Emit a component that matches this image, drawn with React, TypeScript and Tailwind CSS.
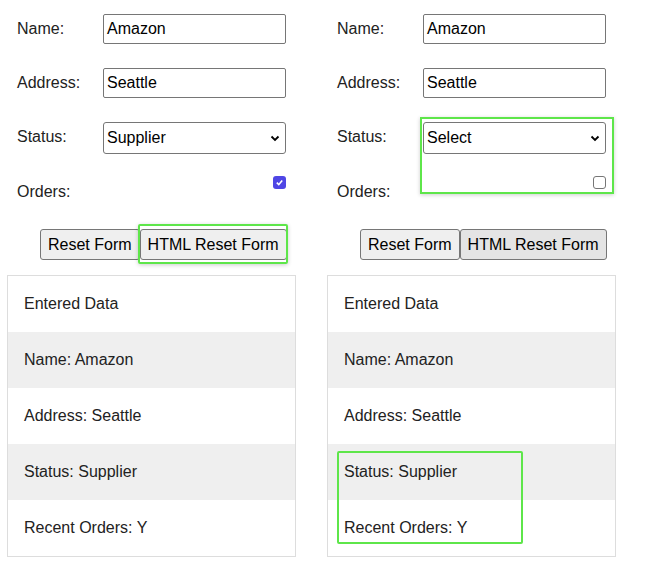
const font = { fontFamily: '"Liberation Sans", Arial, sans-serif' };

function Panel({ status, checked, hlButton, hlStatus, hlTable }: { status: string; checked: boolean; hlButton?: boolean; hlStatus?: boolean; hlTable?: boolean }) {
  const rows = ['Entered Data', 'Name: Amazon', 'Address: Seattle', 'Status: Supplier', 'Recent Orders: Y'];
  return (
    <div className="relative w-[310px] shrink-0 text-[16px] text-[#222]">
      <div className="flex flex-col pl-[10px]">
        <div className="flex h-[54px] pt-[14px]">
          <span className="w-[93px] pl-[7px] pt-[3px]">Name:</span>
          <div className="w-[183px] h-[30px] border border-[#767676] rounded-[2px] px-[3px] flex items-center text-black">Amazon</div>
        </div>
        <div className="flex h-[54px] pt-[14px]">
          <span className="w-[93px] pl-[7px] pt-[3px]">Address:</span>
          <div className="w-[183px] h-[30px] border border-[#767676] rounded-[2px] px-[3px] flex items-center text-black">Seattle</div>
        </div>
        <div className="flex h-[54px] pt-[14px]">
          <span className="w-[93px] pl-[7px] pt-[3px]">Status:</span>
          <div className="w-[183px] h-[32px] border border-[#767676] rounded-[3px] px-[3px] flex items-center justify-between text-black">
            <span>{status}</span>
            <svg width="12" height="12" viewBox="0 0 12 12" className="mr-[1px]"><path d="M2.5 4.5 6 8l3.5-3.5" stroke="#000" strokeWidth="1.8" fill="none" /></svg>
          </div>
        </div>
        <div className="flex h-[46px] pt-[14px]">
          <span className="w-[93px] pl-[7px] pt-[4px]">Orders:</span>
          <div className="w-[183px] flex justify-end">
            {checked ? (
              <div className="w-[13px] h-[13px] rounded-[3px] bg-[#4f46e5] flex items-center justify-center">
                <svg width="9" height="9" viewBox="0 0 10 10"><path d="M2 5.2 4.2 7.4 8 2.8" stroke="#fff" strokeWidth="1.8" fill="none" /></svg>
              </div>
            ) : (
              <div className="w-[13px] h-[13px] rounded-[3px] border border-[#767676] bg-white" />
            )}
          </div>
        </div>
      </div>
      <div className="flex pl-[40px] pt-[21px] h-[67px]">
        <div className="h-[31px] px-[7px] border border-[#767676] rounded-[3px] bg-[#efefef] flex items-center text-black">Reset Form</div>
        <div className={`h-[31px] px-[7px] border border-[#767676] rounded-[3px] flex items-center text-black ${hlStatus ? 'bg-[#e4e4e4]' : 'bg-[#efefef]'}`}>HTML Reset Form</div>
      </div>
      <div className="ml-[7px] w-[289px] border border-[#ddd]">
        {rows.map((r, i) => (
          <div key={r} className={`h-[56px] flex items-center pl-[16px] ${i % 2 === 1 ? 'bg-[#efefef]' : 'bg-white'}`}>{r}</div>
        ))}
      </div>
      {hlButton && <div className="absolute left-[138px] top-[224px] w-[150px] h-[40px] border-2 border-[#5ee64a] rounded-[2px] shadow-[0_1px_4px_rgba(0,0,0,0.2)]" />}
      {hlStatus && <div className="absolute left-[100px] top-[117px] w-[194px] h-[77px] border-2 border-[#5ee64a] shadow-[0_1px_4px_rgba(0,0,0,0.2)]" />}
      {hlTable && <div className="absolute left-[17px] top-[451px] w-[186px] h-[93px] border-2 border-[#5ee64a] rounded-[2px]" />}
    </div>
  );
}

export default function App() {
  return (
    <div className="w-[662px] h-[568px] bg-white flex gap-[10px]" style={font}>
      <Panel status="Supplier" checked hlButton />
      <Panel status="Select" checked={false} hlStatus hlTable />
    </div>
  );
}
